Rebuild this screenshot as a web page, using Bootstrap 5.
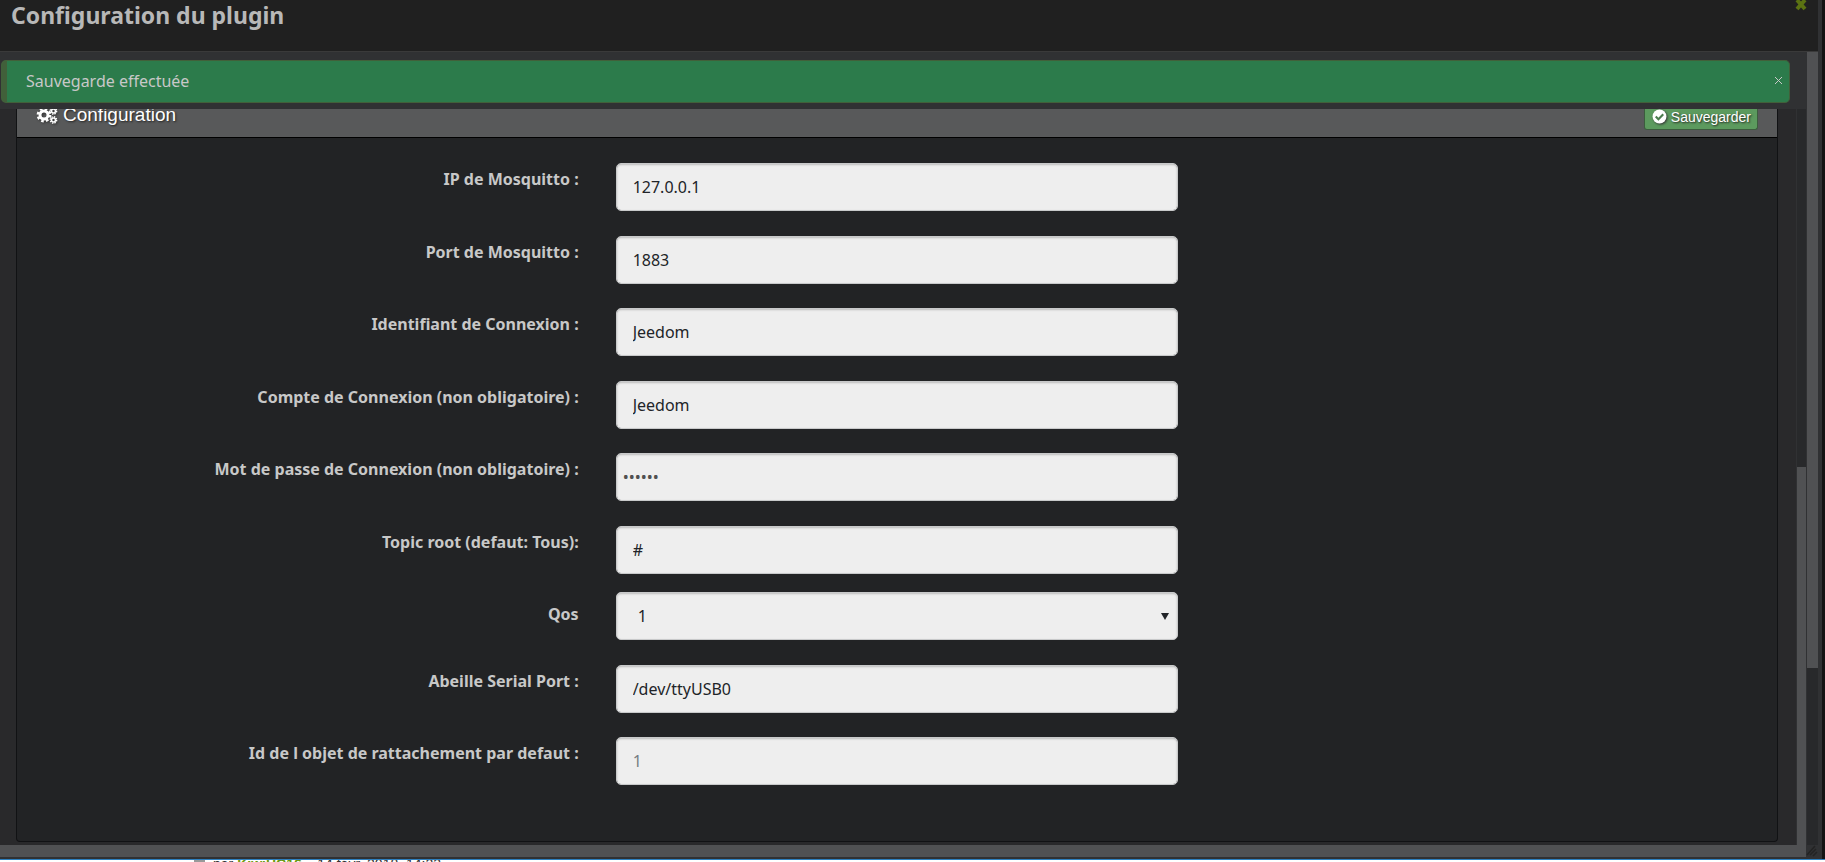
<!DOCTYPE html>
<html lang="fr">
<head>
<meta charset="utf-8">
<meta name="viewport" content="width=device-width, initial-scale=1">
<title>Configuration du plugin</title>
<link rel="stylesheet" href="https://cdn.jsdelivr.net/npm/bootstrap@5.3.0/dist/css/bootstrap.min.css">
<style>
html, body { height: 100%; }
body { background: #141414; color: #c8c8c8; font-family: "Noto Sans", sans-serif; font-size: 16px; line-height: 24px; overflow: hidden; }
.dialog-frame { background: #303133; padding-right: 4px; margin-right: 3px; min-height: 0; border-bottom: 2px solid #303133; }
.dialog-title { background: #202020; border-bottom: 1px solid #3a3a3a; height: 52px; padding: 0 11px; }
.dialog-title h1 { font-size: 23px; line-height: 31px; font-weight: 700; color: #b8b8b8; margin: 0; }
.icon-btn { background: none; border: 0; padding: 0; line-height: 0; }
.dialog-body { background: #29292b; min-height: 0; }
.message-zone { background: #303133; padding: 8px 16px 6px 1px; }
.saved-alert { background: #2c7b4b; border: 1px solid #41603a; border-left-width: 6px; border-radius: 5px; color: #c8c8c8; height: 43px; margin: 0; padding: 0 7px 2px 19px; }
.config-panel { background: #222325; border: 1px solid #111214; border-top: 0; border-radius: 0 0 4px 4px; margin: 0 18px 3px 16px; }
.config-heading { background: #58595a; border-bottom: 1px solid #000; height: 29px; padding: 0 19px; color: #fff; font-family: "Liberation Sans", sans-serif; overflow: hidden; }
.config-heading h2 { font-size: 19px; line-height: 22px; margin: -5px 0 0; text-shadow: 1px 1px 2px #222; font-weight: 400; }
.config-heading svg { filter: drop-shadow(1px 1px 1px #333); }
.save-btn { background: #5c9a5e; border: 1px solid #3c5c3e; border-top: 0; border-radius: 0 0 3px 3px; color: #fff; font-size: 14px; line-height: 16px; padding: 0 6px 4px 7px; height: 21px; text-shadow: 1px 1px 2px #222; }
.config-form { padding-top: 25px; }
.field-row { margin: 0 -18px 24px; --bs-gutter-x: 36px; }
.field-row:nth-child(odd) { margin-bottom: 25px; }
.field-row label { font-weight: 700; color: #c8c8c8; padding-top: 4px; padding-right: 19px; }
.field { background-color: #eee; border: 1px solid #c8c9ca; border-radius: 5px; height: 48px; padding: 0 16px; font-size: 16px; color: #212428; box-shadow: inset 0 1px 2px #bbb; }
.field::placeholder { color: #777d82; }
.field-password { padding-left: 6px; color: #505050; }
.field-select { margin-top: -6px; padding-left: 21px; background-image: none; }
.select-wrap::after { content: ""; position: absolute; right: 27px; top: 15px; border: 4px solid transparent; border-top: 7px solid #212428; border-bottom: 0; pointer-events: none; }
.scroll-track { background: #28292b; border-left: 1px solid #303133; }
.scroll-thumb { background: #505153; }
.scroll-inner { width: 10px; }
.scroll-inner .scroll-thumb { height: 51.4%; }
.scroll-outer { width: 12px; }
.scroll-outer .scroll-thumb { height: 77.7%; }
.scroll-bottom { height: 12px; background: #505153; }
.resize-grip { height: 12px; line-height: 0; }
.page-behind { height: 3px; border-top: 1px solid #2d80c0; background: #fff; overflow: hidden; color: #333; font-size: 14px; padding-left: 194px; font-family: "Liberation Sans", sans-serif; }
.page-behind p { margin: -8px 0 0; line-height: 24px; }
.page-behind a { color: #6b9a10; text-decoration: none; font-weight: 700; }
.post-icon { width: 11px; height: 12px; background: #999; margin-right: 8px; }
</style>
</head>
<body class="d-flex flex-column">
<main class="dialog-frame d-flex flex-column flex-grow-1">
  <header class="dialog-title d-flex justify-content-between align-items-start">
    <h1>Configuration du plugin</h1>
    <button class="icon-btn" type="button" aria-label="Fermer"><svg width="12" height="12" viewBox="0 0 12 12"><path d="M2 0L10 9M10 0L2 9" stroke="#5b7212" stroke-width="4"/></svg></button>
  </header>
  <div class="d-flex flex-grow-1">
    <div class="d-flex flex-column flex-grow-1">
      <div class="dialog-body d-flex flex-column flex-grow-1">
        <div class="message-zone">
          <div class="saved-alert d-flex justify-content-between align-items-center" role="alert">
            <span>Sauvegarde effectuée</span>
            <button class="icon-btn" type="button" aria-label="Fermer"><svg width="7" height="7" viewBox="0 0 7 7"><path d="M0 0L7 7M7 0L0 7" stroke="#c8c8c8"/></svg></button>
          </div>
        </div>
        <div class="d-flex flex-grow-1">
          <section class="config-panel flex-grow-1">
            <div class="config-heading d-flex justify-content-between align-items-start">
              <h2 class="d-flex"><svg class="me-1" width="23" height="22" viewBox="0 0 23 22" fill="none" stroke="#fff"><circle cx="8" cy="11" r="4" stroke-width="3"/><circle cx="8" cy="11" r="6.2" stroke-width="2.4" stroke-dasharray="2.6 2.27"/><circle cx="17.5" cy="7" r="2" stroke-width="1.6"/><circle cx="17.5" cy="7" r="3.2" stroke-width="1.4" stroke-dasharray="1.4 1.11"/><circle cx="17.5" cy="16" r="2" stroke-width="1.6"/><circle cx="17.5" cy="16" r="3.2" stroke-width="1.4" stroke-dasharray="1.4 1.11"/></svg>Configuration</h2>
              <button class="save-btn d-flex" type="button"><svg class="me-1" width="15" height="15" viewBox="0 0 14 14"><circle cx="7" cy="7" r="6.5" fill="#fff"/><path d="M3.500 7L6 9.500L10.500 5" fill="none" stroke="#4c7c4e" stroke-width="2"/></svg>Sauvegarder</button>
            </div>
            <form class="config-form">
              <div class="row field-row"><label class="col-4 text-end" for="ip">IP de Mosquitto :</label><div class="col-4"><input class="form-control field" id="ip" type="text" value="127.0.0.1"></div></div>
              <div class="row field-row"><label class="col-4 text-end" for="port">Port de Mosquitto :</label><div class="col-4"><input class="form-control field" id="port" type="text" value="1883"></div></div>
              <div class="row field-row"><label class="col-4 text-end" for="ident">Identifiant de Connexion :</label><div class="col-4"><input class="form-control field" id="ident" type="text" value="Jeedom"></div></div>
              <div class="row field-row"><label class="col-4 text-end" for="compte">Compte de Connexion (non obligatoire) :</label><div class="col-4"><input class="form-control field" id="compte" type="text" value="Jeedom"></div></div>
              <div class="row field-row"><label class="col-4 text-end" for="mdp">Mot de passe de Connexion (non obligatoire) :</label><div class="col-4"><input class="form-control field field-password" id="mdp" type="password" value="jeedom"></div></div>
              <div class="row field-row"><label class="col-4 text-end" for="topic">Topic root (defaut: Tous):</label><div class="col-4"><input class="form-control field" id="topic" type="text" value="#"></div></div>
              <div class="row field-row"><label class="col-4 text-end" for="qos">Qos</label><div class="col-4 position-relative select-wrap"><select class="form-select field field-select" id="qos"><option>0</option><option selected>1</option><option>2</option></select></div></div>
              <div class="row field-row"><label class="col-4 text-end" for="serial">Abeille Serial Port :</label><div class="col-4"><input class="form-control field" id="serial" type="text" value="/dev/ttyUSB0"></div></div>
              <div class="row field-row"><label class="col-4 text-end" for="objet">Id de l objet de rattachement par defaut :</label><div class="col-4"><input class="form-control field" id="objet" type="text" placeholder="1"></div></div>
            </form>
          </section>
          <div class="scroll-track scroll-inner d-flex flex-column justify-content-end"><div class="scroll-thumb"></div></div>
        </div>
      </div>
      <div class="scroll-bottom"></div>
    </div>
    <div class="d-flex flex-column">
      <div class="scroll-track scroll-outer flex-grow-1"><div class="scroll-thumb"></div></div>
      <div class="resize-grip"><svg width="12" height="12" viewBox="0 0 12 12"><path d="M1 10L9 1M4 10L10 4M7 11L11 7" stroke="#232323" stroke-width="1.500"/></svg></div>
    </div>
  </div>
</main>
<footer class="page-behind d-flex"><span class="post-icon"></span><p>par <a href="#">KiwiHC16</a> » 14 févr. 2018, 14:23</p></footer>
<script src="https://cdn.jsdelivr.net/npm/bootstrap@5.3.0/dist/js/bootstrap.bundle.min.js"></script>
</body>
</html>
